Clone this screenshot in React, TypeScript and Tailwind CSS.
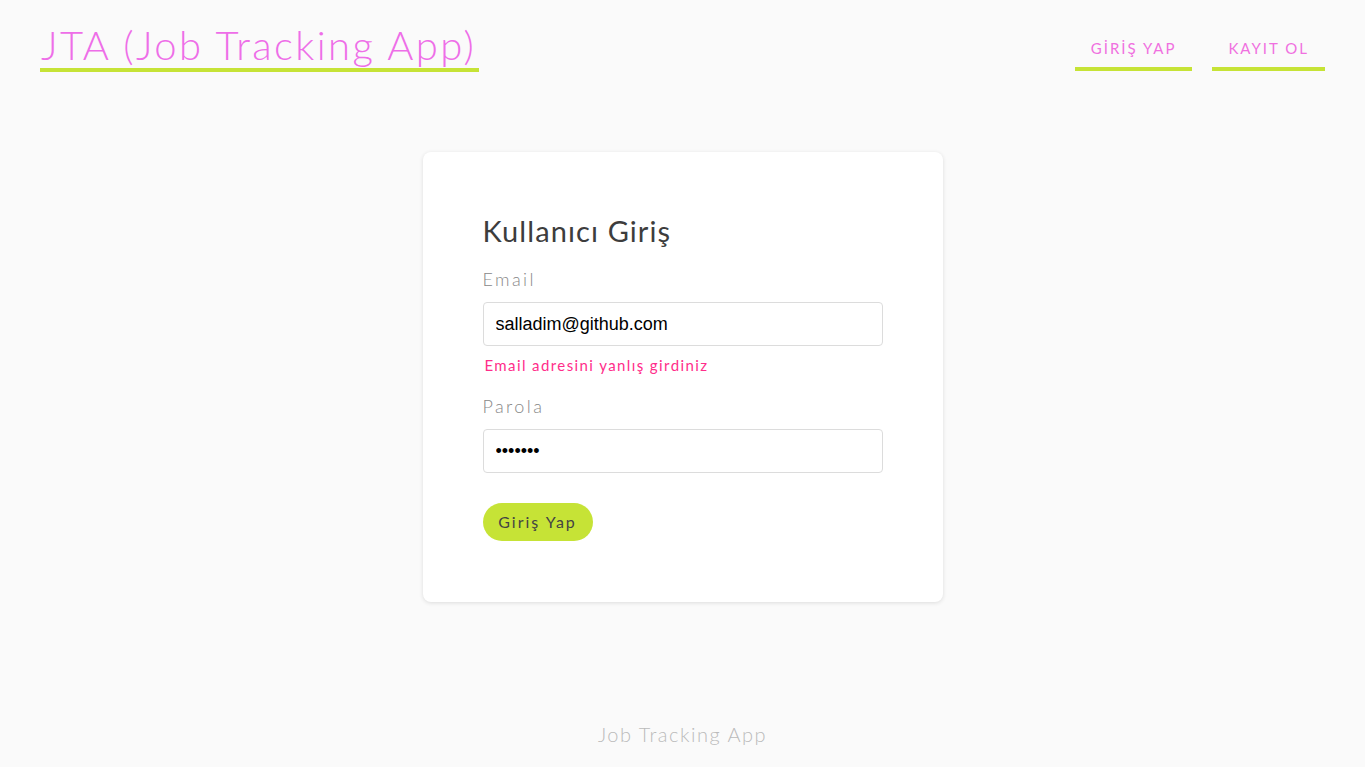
import React from "react";

const qs = { fontFamily: "Lato, 'Noto Sans', sans-serif" };

export default function App() {
  return (
    <div className="min-h-screen bg-[#fafafa] flex flex-col" style={qs}>
      <header className="flex items-start justify-between px-10 pt-[22px]">
        <a className="block border-b-4 border-[#c6e336] text-[40px] leading-[46px] text-[#ee6ee8] font-light tracking-[2.4px] pl-[1px] pr-[3px]">
          JTA (Job Tracking App)
        </a>
        <nav className="flex gap-5 pt-[17px]">
          <a className="block border-b-4 border-[#c6e336] px-4 pb-[10px] text-[15px] leading-[18px] tracking-[2px] text-[#f070e0]">
            GİRİŞ YAP
          </a>
          <a className="block border-b-4 border-[#c6e336] px-4 pb-[10px] text-[15px] leading-[18px] tracking-[2px] text-[#f070e0]">
            KAYIT OL
          </a>
        </nav>
      </header>

      <main className="flex justify-center mt-[80px]">
        <div className="w-[520px] bg-white rounded-lg shadow-[0_1px_4px_rgba(0,0,0,0.12)] p-[60px] pb-[61px]">
          <h1 className="text-[29px] leading-[38px] text-[#3d3d3d] font-normal tracking-[1.1px]">Kullanıcı Giriş</h1>
          <label className="block mt-[16px] text-[18px] leading-[26px] text-[#888] font-light tracking-[2.4px]">Email</label>
          <input
            className="block mt-[10px] w-full h-[44px] border border-[#dcdcdc] rounded px-3 text-[18px] text-black outline-none"
            style={{ fontFamily: "'Liberation Sans', Arial, sans-serif" }}
            defaultValue="salladim@github.com"
          />
          <p className="mt-[9px] pl-[2px] text-[15px] leading-[20px] text-[#ff2d8a] tracking-[1.4px]">
            Email adresini yanlış girdiniz
          </p>
          <label className="block mt-[18px] text-[18px] leading-[26px] text-[#888] font-light tracking-[2.4px]">Parola</label>
          <input
            type="password"
            className="block mt-[10px] w-full h-[44px] border border-[#dcdcdc] rounded px-3 text-[18px] text-black outline-none"
            style={{ fontFamily: "'Liberation Sans', Arial, sans-serif" }}
            defaultValue="1234567"
          />
          <button className="mt-[30px] h-[38px] w-[110px] rounded-full bg-[#c6e336] text-[16px] tracking-[2px] text-[#444]">
            Giriş Yap
          </button>
        </div>
      </main>

      <footer className="mt-auto pb-[20px] text-center text-[20px] leading-[26px] text-[#bbb] font-light tracking-[1.5px]">
        Job Tracking App
      </footer>
    </div>
  );
}
